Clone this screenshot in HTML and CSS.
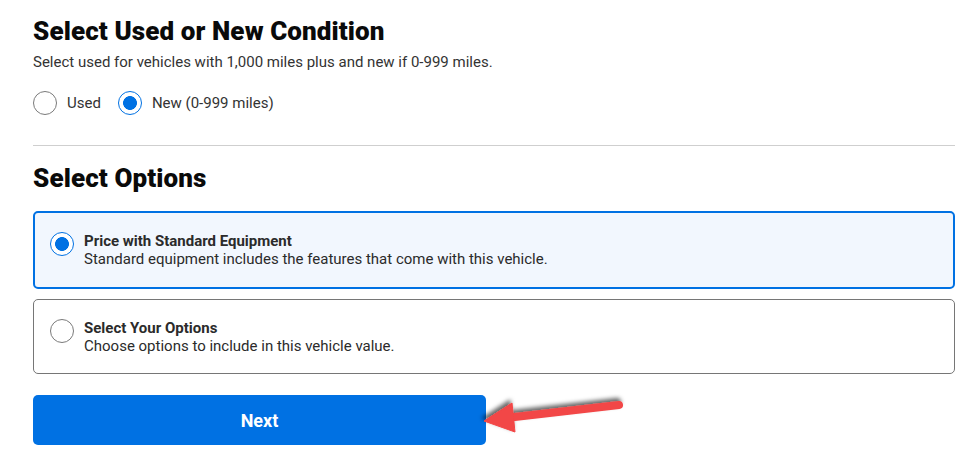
FILE: index.html
```html
<!DOCTYPE html>
<html lang="en">
<head>
<meta charset="utf-8">
<title>Select Condition</title>
<link rel="stylesheet" href="styles.css">
</head>
<body>
<main class="page">
  <section class="condition">
    <h1 class="title">Select Used or New Condition</h1>
    <p class="subtitle">Select used for vehicles with 1,000 miles plus and new if 0-999 miles.</p>
    <div class="radio-row">
      <label class="radio-item"><span class="radio"></span><span>Used</span></label>
      <label class="radio-item"><span class="radio checked"></span><span>New (0-999 miles)</span></label>
    </div>
  </section>
  <hr class="divider">
  <section class="options">
    <h2 class="title">Select Options</h2>
    <div class="card selected">
      <span class="radio checked"></span>
      <div class="card-text">
        <div class="card-title">Price with Standard Equipment</div>
        <div class="card-desc">Standard equipment includes the features that come with this vehicle.</div>
      </div>
    </div>
    <div class="card">
      <span class="radio"></span>
      <div class="card-text">
        <div class="card-title">Select Your Options</div>
        <div class="card-desc">Choose options to include in this vehicle value.</div>
      </div>
    </div>
    <button class="next-btn">Next</button>
  </section>
  <svg class="annotation" width="160" height="60" viewBox="475 385 160 60" xmlns="http://www.w3.org/2000/svg">
    <defs>
      <filter id="sh" x="-20%" y="-50%" width="140%" height="200%">
        <feDropShadow dx="-2" dy="-3" stdDeviation="2" flood-color="#000" flood-opacity="0.6"/>
      </filter>
    </defs>
    <g filter="url(#sh)" fill="#f24646" stroke="#f24646">
      <line x1="506" y1="418" x2="619" y2="405" stroke-width="8" stroke-linecap="round"/>
      <polygon points="484,421 512,403 515,432" stroke-width="1" stroke-linejoin="round"/>
    </g>
  </svg>
</main>
</body>
</html>
```
FILE: styles.css
```css
* { box-sizing: border-box; }
html, body { margin: 0; padding: 0; background: #fff; }
body {
  font-family: Roboto, "Liberation Sans", Arial, sans-serif;
  color: #2b2b2b;
  font-size: 15px;
}
.page {
  position: relative;
  width: 955px;
  padding: 15px 0 0 33px;
}
.title {
  margin: 0;
  font-family: Roboto, "Liberation Sans", sans-serif;
  font-weight: 900;
  font-size: 26px;
  line-height: 32px;
  color: #0a0a0a;
  letter-spacing: 0.1px;
}
.subtitle {
  margin: 5px 0 0;
  font-size: 15px;
  line-height: 20px;
  color: #333;
}
.radio-row {
  display: flex;
  gap: 17px;
  margin-top: 19px;
}
.radio-item {
  display: flex;
  align-items: center;
  gap: 10px;
  font-size: 15px;
  color: #333;
}
.radio {
  width: 24px;
  height: 24px;
  flex: 0 0 24px;
  border-radius: 50%;
  border: 1px solid #7a7a7a;
  background: #fff;
  display: inline-block;
}
.radio.checked {
  border-color: #0071e3;
  background: radial-gradient(circle, #0071e3 0 6.6px, #fff 7.2px);
}
.divider {
  border: 0;
  border-top: 1px solid #cfcfcf;
  margin: 30px 0 0;
}
.options .title { margin-top: 16px; margin-bottom: 17px; }
.card {
  display: flex;
  align-items: flex-start;
  gap: 10px;
  border: 1px solid #767676;
  border-radius: 5px;
  padding: 19px 16px 18px 16px;
  margin-bottom: 10px;
  background: #fff;
}
.card.selected {
  border: 2px solid #0071e3;
  background: #f2f7fe;
  padding: 19px 15px;
}
.card-text { line-height: 18px; }
.card-title { font-weight: 700; color: #2b2b2b; }
.card-desc { color: #2b2b2b; }
.next-btn {
  display: block;
  margin-top: 21px;
  width: 453px;
  height: 50px;
  border: 0;
  border-radius: 5px;
  background: #0071e3;
  color: #fff;
  font-family: Roboto, "Liberation Sans", sans-serif;
  font-weight: 700;
  font-size: 18px;
  cursor: pointer;
}
.annotation {
  position: absolute;
  left: 475px;
  top: 385px;
  overflow: visible;
}
```
